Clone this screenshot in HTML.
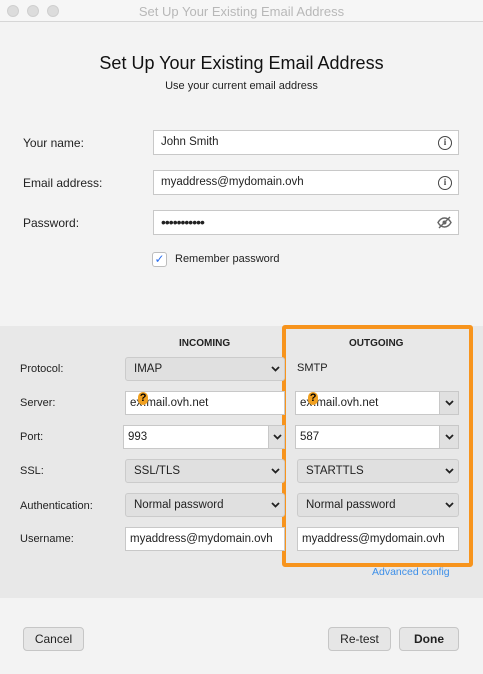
<!DOCTYPE html>
<html><head><style>
*{box-sizing:border-box;margin:0;padding:0}
body{width:483px;height:674px;background:#f3f3f3;font-family:"Liberation Sans",sans-serif;font-size:12px;color:#222;position:relative;overflow:hidden}
.a{position:absolute}
.tb{left:0;top:0;width:483px;height:22px;background:#f6f6f6;border-bottom:1px solid #d6d6d6}
.dot{width:12px;height:12px;border-radius:50%;background:#dcdcdc;border:1px solid #cfcfcf;top:5px}
.in{background:#fff;border:1px solid #c8c8c8;height:25px;line-height:23px;padding-left:7px;font-size:11.5px}
.sel{background:#e0e0e0;border:1px solid #cbcbcb;border-radius:3px;height:24px;line-height:22px;padding-left:8px;font-size:11.5px}
.chev{position:absolute;right:4px;top:8px;width:9px;height:6px}
.dd{background:#e0e0e0;border:1px solid #c8c8c8;height:24px}
.dd svg{position:absolute;left:50%;top:8px;margin-left:-4px}
.lbl{font-size:12px}
.btn{background:#e6e6e6;border:1px solid #c6c6c6;border-radius:4px;height:24px;line-height:22px;text-align:center;font-size:12px}
.ic{position:absolute;right:6px;top:5px;width:14px;height:14px;border:1.5px solid #444;border-radius:50%;font-size:9px;font-weight:bold;text-align:center;line-height:11px;color:#444;font-family:"Liberation Serif",serif}
.q{display:inline-block;width:10px;height:13px;background:#f0a020;border-radius:5px;color:#000;font-weight:bold;font-size:11px;line-height:13px;text-align:center;vertical-align:top;margin:0 -5px 0 -4px;position:relative;top:0}
</style></head><body>
<div class="a tb"></div>
<div class="a dot" style="left:7px"></div><div class="a dot" style="left:27px"></div><div class="a dot" style="left:47px"></div>
<div class="a" style="left:0;width:483px;top:4px;text-align:center;color:#b8b8b8;font-size:13px">Set Up Your Existing Email Address</div>
<div class="a" style="left:0;width:483px;top:53px;text-align:center;font-size:18px;color:#111">Set Up Your Existing Email Address</div>
<div class="a" style="left:0;width:483px;top:80px;text-align:center;font-size:11px">Use your current email address</div>

<div class="a lbl" style="left:23px;top:136px">Your name:</div>
<div class="a lbl" style="left:23px;top:176px">Email address:</div>
<div class="a lbl" style="left:23px;top:216px">Password:</div>
<div class="a in" style="left:153px;top:130px;width:306px">John Smith<span class="ic">i</span></div>
<div class="a in" style="left:153px;top:170px;width:306px">myaddress@mydomain.ovh<span class="ic">i</span></div>
<div class="a in" style="left:153px;top:210px;width:306px;font-size:14px;letter-spacing:-1px">•••••••••••
<svg class="a" style="right:6px;top:5px" width="15" height="13" viewBox="0 0 15 13"><path d="M1 6.5C3 3 5 2 7.5 2S12 3 14 6.5C12 10 10 11 7.5 11S3 10 1 6.5Z" fill="none" stroke="#666" stroke-width="1.4"/><circle cx="7.5" cy="6.5" r="2" fill="#666"/><path d="M2 12L13 1" stroke="#666" stroke-width="1.4"/></svg></div>
<div class="a" style="left:152px;top:252px;width:15px;height:15px;background:#fff;border:1px solid #bdbdbd;border-radius:3px;color:#2a6ef0;font-size:12px;line-height:13px;text-align:center">✓</div>
<div class="a lbl" style="left:175px;top:253px;font-size:11px">Remember password</div>

<div class="a" style="left:0;top:326px;width:483px;height:272px;background:#e8e8e8"></div>
<div class="a" style="left:282px;top:325px;width:191px;height:242px;border:4px solid #f7941d;border-radius:3px"></div>
<div class="a" style="left:179px;top:338px;font-size:10px;font-weight:bold">INCOMING</div>
<div class="a" style="left:349px;top:338px;font-size:10px;font-weight:bold">OUTGOING</div>

<div class="a lbl" style="left:20px;top:363px;font-size:11px">Protocol:</div>
<div class="a lbl" style="left:20px;top:397px;font-size:11px">Server:</div>
<div class="a lbl" style="left:20px;top:431px;font-size:11px">Port:</div>
<div class="a lbl" style="left:20px;top:465px;font-size:11px">SSL:</div>
<div class="a lbl" style="left:20px;top:500px;font-size:11px">Authentication:</div>
<div class="a lbl" style="left:20px;top:533px;font-size:11px">Username:</div>

<div class="a sel" style="left:125px;top:357px;width:160px">IMAP<svg class="chev" viewBox="0 0 9 6"><path d="M1 1L4.5 4.5L8 1" fill="none" stroke="#222" stroke-width="1.8"/></svg></div>
<div class="a in" style="left:125px;top:391px;width:160px;height:24px;line-height:22px;padding-left:4px">ex<span class="q">?</span>.mail.ovh.net</div>
<div class="a in" style="left:123px;top:425px;width:146px;height:24px;line-height:22px;padding-left:4px">993</div>
<div class="a dd" style="left:268px;top:425px;width:17px"><svg width="9" height="6" viewBox="0 0 9 6"><path d="M1 1L4.5 4.5L8 1" fill="none" stroke="#222" stroke-width="1.8"/></svg></div>
<div class="a sel" style="left:125px;top:459px;width:160px">SSL/TLS<svg class="chev" viewBox="0 0 9 6"><path d="M1 1L4.5 4.5L8 1" fill="none" stroke="#222" stroke-width="1.8"/></svg></div>
<div class="a sel" style="left:125px;top:493px;width:160px">Normal password<svg class="chev" viewBox="0 0 9 6"><path d="M1 1L4.5 4.5L8 1" fill="none" stroke="#222" stroke-width="1.8"/></svg></div>
<div class="a in" style="left:125px;top:527px;width:160px;height:24px;line-height:22px;padding-left:4px">myaddress@mydomain.ovh</div>

<div class="a" style="left:297px;top:362px;font-size:11px">SMTP</div>
<div class="a in" style="left:295px;top:391px;width:145px;height:24px;line-height:22px;padding-left:4px">ex<span class="q">?</span>.mail.ovh.net</div>
<div class="a dd" style="left:439px;top:391px;width:20px"><svg width="9" height="6" viewBox="0 0 9 6"><path d="M1 1L4.5 4.5L8 1" fill="none" stroke="#222" stroke-width="1.8"/></svg></div>
<div class="a in" style="left:295px;top:425px;width:145px;height:24px;line-height:22px;padding-left:4px">587</div>
<div class="a dd" style="left:439px;top:425px;width:20px"><svg width="9" height="6" viewBox="0 0 9 6"><path d="M1 1L4.5 4.5L8 1" fill="none" stroke="#222" stroke-width="1.8"/></svg></div>
<div class="a sel" style="left:297px;top:459px;width:162px">STARTTLS<svg class="chev" viewBox="0 0 9 6"><path d="M1 1L4.5 4.5L8 1" fill="none" stroke="#222" stroke-width="1.8"/></svg></div>
<div class="a sel" style="left:297px;top:493px;width:162px">Normal password<svg class="chev" viewBox="0 0 9 6"><path d="M1 1L4.5 4.5L8 1" fill="none" stroke="#222" stroke-width="1.8"/></svg></div>
<div class="a in" style="left:297px;top:527px;width:162px;height:24px;line-height:22px;padding-left:4px">myaddress@mydomain.ovh</div>
<div class="a" style="left:372px;top:566px;font-size:10.5px;color:#3d8fe8">Advanced config</div>

<div class="a btn" style="left:23px;top:627px;width:61px">Cancel</div>
<div class="a btn" style="left:328px;top:627px;width:63px">Re-test</div>
<div class="a btn" style="left:399px;top:627px;width:60px;font-weight:bold">Done</div>
</body></html>
